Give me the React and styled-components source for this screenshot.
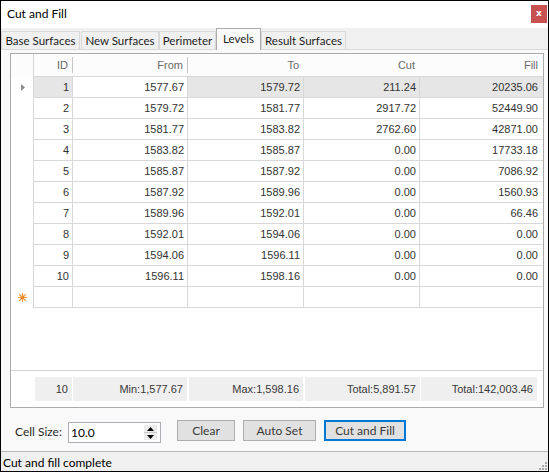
import React from 'react';
import styled, { createGlobalStyle } from 'styled-components';

const UI_FONT = `Lato, "Noto Sans", "DejaVu Sans", sans-serif`;
const GRID_FONT = `"Liberation Sans", Arial, sans-serif`;

const GlobalStyle = createGlobalStyle`
  html, body { margin: 0; padding: 0; background: #ffffff; }
  * { box-sizing: border-box; }
`;

const Window = styled.div`
  width: 549px;
  height: 472px;
  border: 1px solid #000;
  display: flex;
  flex-direction: column;
  background: #f0f0f0;
  font-family: ${UI_FONT};
  font-size: 12px;
  color: #000;
  overflow: hidden;
`;

const TitleBar = styled.div`
  height: 27px;
  flex: none;
  background: #fff;
  display: flex;
  align-items: flex-start;
  justify-content: space-between;
  padding-left: 6px;
`;

const Title = styled.span`
  line-height: 26px;
  font-size: 12px;
`;

const CloseButton = styled.div`
  width: 16px;
  height: 18px;
  margin-top: 4px;
  margin-right: 1px;
  background: #c75050;
  color: #fff;
  font-family: "DejaVu Sans", sans-serif;
  font-weight: bold;
  font-size: 9px;
  display: flex;
  align-items: center;
  justify-content: center;
  padding-bottom: 2px;
`;

const TabStrip = styled.div`
  height: 21px;
  flex: none;
  display: flex;
  align-items: flex-end;
  position: relative;
  z-index: 1;
`;

const Tab = styled.div`
  width: ${(p) => p.$w}px;
  height: ${(p) => (p.$active ? 22 : 18)}px;
  margin-bottom: ${(p) => (p.$active ? -1 : 0)}px;
  margin-right: ${(p) => (p.$gap ? 1 : 0)}px;
  background: ${(p) => (p.$active ? '#f9f9f9' : '#f0f0f0')};
  border: 1px solid ${(p) => (p.$active ? '#acacac' : '#d9d9d9')};
  border-bottom: none;
  display: flex;
  align-items: ${(p) => (p.$active ? 'flex-start' : 'center')};
  justify-content: center;
  padding-top: ${(p) => (p.$active ? 3 : 0)}px;
  font-size: 11.5px;
  color: #1e1e1e;
  white-space: nowrap;
`;

const Panel = styled.div`
  flex: 1;
  background: #f9f9f9;
  border-top: 1px solid #d9d9d9;
  padding: 3px 4px 0 9px;
  display: flex;
  flex-direction: column;
`;

const Grid = styled.div`
  height: 355px;
  flex: none;
  border: 1px solid #ababab;
  background: #fff;
  display: flex;
  flex-direction: column;
  font-family: ${GRID_FONT};
  font-size: 11px;
  color: #333;
`;

const Row = styled.div`
  display: flex;
  height: ${(p) => p.$h || 21}px;
  flex: none;
`;

const HeaderCell = styled.div`
  position: relative;
  width: ${(p) => (p.$w ? `${p.$w}px` : 'auto')};
  flex: ${(p) => (p.$w ? 'none' : 1)};
  height: 23px;
  background: #fcfcfc;
  border-bottom: ${(p) => (p.$indicator ? 'none' : '1px solid #d8d8d8')};
  border-right: ${(p) => (p.$indicator ? '1px solid #d8d8d8' : 'none')};
  text-align: right;
  padding-right: 5px;
  line-height: 22px;
  color: #6a6a6a;
  &::after {
    content: '';
    display: ${(p) => (p.$sep ? 'block' : 'none')};
    position: absolute;
    right: 0;
    top: 3px;
    bottom: 3px;
    width: 1px;
    background: #c6c6c6;
  }
`;

const IndicatorCell = styled.div`
  width: 23px;
  flex: none;
  border-right: 1px solid #d8d8d8;
  display: flex;
  align-items: center;
  justify-content: center;
  padding-left: 1px;
`;

const Cell = styled.div`
  width: ${(p) => (p.$w ? `${p.$w}px` : 'auto')};
  flex: ${(p) => (p.$w ? 'none' : 1)};
  border-right: ${(p) => (p.$last ? 'none' : '1px solid #d8d8d8')};
  border-bottom: 1px solid #d8d8d8;
  background: ${(p) => (p.$selected ? '#e6e6e6' : '#fff')};
  text-align: right;
  padding-right: ${(p) => (p.$last ? 5 : 3)}px;
  line-height: 20px;
  white-space: nowrap;
`;

const Spacer = styled.div`
  flex: 1;
`;

const Footer = styled.div`
  height: 37px;
  flex: none;
  border-top: 1px solid #d4d4d4;
  padding-top: 6px;
  display: flex;
`;

const FooterCol = styled.div`
  width: ${(p) => (p.$w ? `${p.$w}px` : 'auto')};
  flex: ${(p) => (p.$w ? 'none' : 1)};
  padding: 0 ${(p) => p.$pr ?? 1}px 0 ${(p) => p.$pl ?? 1}px;
`;

const FooterCell = styled.div`
  height: 24px;
  background: #efefef;
  text-align: right;
  padding-right: 4px;
  line-height: 24px;
  white-space: nowrap;
  color: #3a3a3a;
`;

const Controls = styled.div`
  display: flex;
  align-items: flex-start;
  margin-top: 12px;
  padding-left: 5px;
`;

const Label = styled.div`
  width: 53px;
  line-height: 21px;
  margin-top: 1px;
  color: #2a2a2a;
`;

const SpinBox = styled.div`
  width: 93px;
  height: 21px;
  margin-top: 2px;
  margin-right: 16px;
  border: 1px solid #abadb3;
  background: #fff;
  display: flex;
  align-items: center;
  padding: 0 2px 0 2px;
`;

const SpinValue = styled.div`
  flex: 1;
  line-height: 19px;
  color: #000;
`;

const SpinButtons = styled.div`
  width: 13px;
  height: 15px;
  display: flex;
  flex-direction: column;
  gap: 1px;
  background: #c8c8c8;
  margin-right: 1px;
`;

const SpinButton = styled.div`
  flex: 1;
  background: #ececec;
  display: flex;
  align-items: center;
  justify-content: center;
`;

const Button = styled.div`
  width: ${(p) => p.$w}px;
  height: 21px;
  margin-right: 8px;
  background: #e1e1e1;
  border: ${(p) => (p.$primary ? '2px solid #0078d7' : '1px solid #adadad')};
  display: flex;
  align-items: center;
  justify-content: center;
  padding-bottom: 1px;
  color: #3a3a3a;
  font-size: 12px;
`;

const StatusBar = styled.div`
  height: 20px;
  flex: none;
  border-top: 1px solid #b9b9b9;
  background: #f0f0f0;
  display: flex;
  align-items: flex-end;
  justify-content: space-between;
  padding-left: 2px;
`;

const StatusText = styled.div`
  align-self: center;
  line-height: 19px;
  margin-top: 1px;
  font-size: 12px;
`;

const Triangle = () => (
  <svg width="4" height="7" viewBox="0 0 4 7">
    <polygon points="0,0 4,3.5 0,7" fill="#8c8c8c" />
  </svg>
);

const Star = () => (
  <svg width="9" height="9" viewBox="0 0 9 9">
    <g stroke="#f5a04a" strokeWidth="1.2" strokeLinecap="round">
      <line x1="4.5" y1="0.3" x2="4.5" y2="8.7" />
      <line x1="0.3" y1="4.5" x2="8.7" y2="4.5" />
      <line x1="1.5" y1="1.5" x2="7.5" y2="7.5" />
      <line x1="7.5" y1="1.5" x2="1.5" y2="7.5" />
    </g>
    <circle cx="4.5" cy="4.5" r="2" fill="#f08a24" />
  </svg>
);

const Grip = () => (
  <svg width="9" height="9" viewBox="0 0 9 9" style={{ display: 'block', marginRight: 1, marginBottom: 1 }}>
    {[[7, 1], [4, 4], [7, 4], [1, 7], [4, 7], [7, 7]].map(([x, y]) => (
      <rect key={`${x}-${y}`} x={x} y={y} width="2" height="2" fill="#a8a8a8" />
    ))}
  </svg>
);

const UpArrow = () => (
  <svg width="7" height="4" viewBox="0 0 7 4"><polygon points="0,4 3.5,0 7,4" fill="#000" /></svg>
);
const DownArrow = () => (
  <svg width="7" height="4" viewBox="0 0 7 4"><polygon points="0,0 7,0 3.5,4" fill="#000" /></svg>
);

const COLS = [
  { key: 'id', label: 'ID', w: 39 },
  { key: 'from', label: 'From', w: 115 },
  { key: 'to', label: 'To', w: 116 },
  { key: 'cut', label: 'Cut', w: 116 },
  { key: 'fill', label: 'Fill' },
];

const DATA = [
  ['1', '1577.67', '1579.72', '211.24', '20235.06'],
  ['2', '1579.72', '1581.77', '2917.72', '52449.90'],
  ['3', '1581.77', '1583.82', '2762.60', '42871.00'],
  ['4', '1583.82', '1585.87', '0.00', '17733.18'],
  ['5', '1585.87', '1587.92', '0.00', '7086.92'],
  ['6', '1587.92', '1589.96', '0.00', '1560.93'],
  ['7', '1589.96', '1592.01', '0.00', '66.46'],
  ['8', '1592.01', '1594.06', '0.00', '0.00'],
  ['9', '1594.06', '1596.11', '0.00', '0.00'],
  ['10', '1596.11', '1598.16', '0.00', '0.00'],
];

const TABS = [
  { label: 'Base Surfaces', w: 79, gap: true },
  { label: 'New Surfaces', w: 78 },
  { label: 'Perimeter', w: 57 },
  { label: 'Levels', w: 45, active: true },
  { label: 'Result Surfaces', w: 85 },
];

export default function App() {
  return (
    <>
      <GlobalStyle />
      <Window>
        <TitleBar>
          <Title>Cut and Fill</Title>
          <CloseButton>x</CloseButton>
        </TitleBar>
        <TabStrip>
          {TABS.map((t) => (
            <Tab key={t.label} $w={t.w} $active={t.active} $gap={t.gap}>
              {t.label}
            </Tab>
          ))}
        </TabStrip>
        <Panel>
          <Grid>
            <Row $h={23}>
              <HeaderCell $w={23} $indicator />
              {COLS.map((c, i) => (
                <HeaderCell key={c.key} $w={c.w} $sep={i < 2}>
                  {c.label}
                </HeaderCell>
              ))}
            </Row>
            {DATA.map((r, ri) => (
              <Row key={r[0]}>
                <IndicatorCell>{ri === 0 ? <Triangle /> : null}</IndicatorCell>
                {COLS.map((c, ci) => (
                  <Cell
                    key={c.key}
                    $w={c.w}
                    $last={ci === COLS.length - 1}
                    $selected={ri === 0 && ci !== 1}
                  >
                    {r[ci]}
                  </Cell>
                ))}
              </Row>
            ))}
            <Row>
              <IndicatorCell>
                <Star />
              </IndicatorCell>
              {COLS.map((c, ci) => (
                <Cell key={c.key} $w={c.w} $last={ci === COLS.length - 1} />
              ))}
            </Row>
            <Spacer />
            <Footer>
              <FooterCol $w={23} $pl={0} $pr={0} />
              <FooterCol $w={39}><FooterCell>10</FooterCell></FooterCol>
              <FooterCol $w={115} $pl={0}><FooterCell>Min:1,577.67</FooterCell></FooterCol>
              <FooterCol $w={116}><FooterCell>Max:1,598.16</FooterCell></FooterCol>
              <FooterCol $w={116} $pr={0}><FooterCell>Total:5,891.57</FooterCell></FooterCol>
              <FooterCol $pr={6}><FooterCell>Total:142,003.46</FooterCell></FooterCol>
            </Footer>
          </Grid>
          <Controls>
            <Label>Cell Size:</Label>
            <SpinBox>
              <SpinValue>10.0</SpinValue>
              <SpinButtons>
                <SpinButton><UpArrow /></SpinButton>
                <SpinButton><DownArrow /></SpinButton>
              </SpinButtons>
            </SpinBox>
            <Button $w={58}>Clear</Button>
            <Button $w={73}>Auto Set</Button>
            <Button $w={82} $primary>Cut and Fill</Button>
          </Controls>
        </Panel>
        <StatusBar>
          <StatusText>Cut and fill complete</StatusText>
          <Grip />
        </StatusBar>
      </Window>
    </>
  );
}
